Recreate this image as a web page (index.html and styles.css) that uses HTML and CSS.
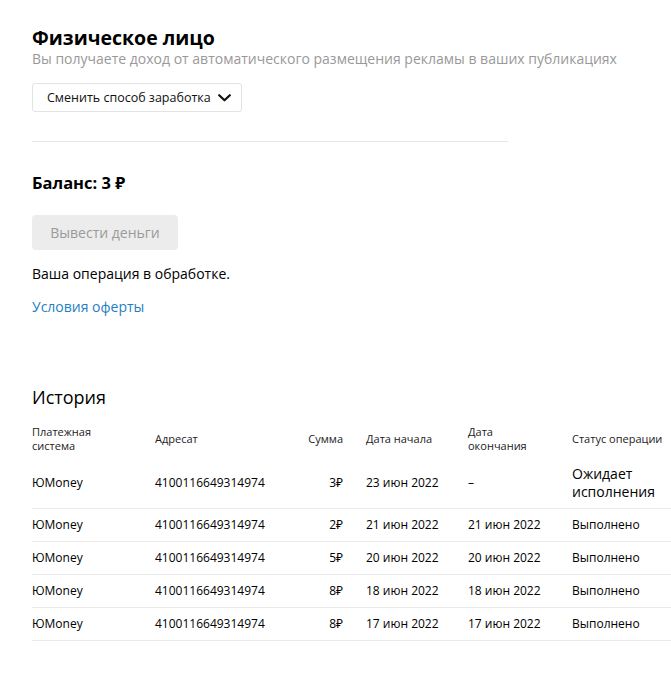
FILE: index.html
```html
<!DOCTYPE html>
<html lang="ru">
<head>
<meta charset="utf-8">
<link rel="stylesheet" href="styles.css">
</head>
<body>
<main class="page">
  <section class="head">
    <h1 class="title">Физическое лицо</h1>
    <p class="subtitle">Вы получаете доход от автоматического размещения рекламы в ваших публикациях</p>
    <button class="switch">Сменить способ заработка
      <svg class="chev" width="13" height="8" viewBox="0 0 13 8"><path d="M1.2 1.2 L6.5 6.3 L11.8 1.2" fill="none" stroke="#111" stroke-width="2.2" stroke-linecap="round" stroke-linejoin="round"/></svg>
    </button>
  </section>
  <hr class="divider">
  <section class="balance">
    <h2 class="balance-title">Баланс: 3 ₽</h2>
    <button class="withdraw" disabled>Вывести деньги</button>
    <p class="status">Ваша операция в обработке.</p>
    <a class="offer" href="#">Условия оферты</a>
  </section>
  <section class="history">
    <h2 class="history-title">История</h2>
    <table class="hist">
      <colgroup>
        <col class="c1"><col class="c2"><col class="c3"><col class="c4"><col class="c5"><col class="c6">
      </colgroup>
      <thead>
        <tr>
          <th>Платежная<br>система</th>
          <th>Адресат</th>
          <th class="num">Сумма</th>
          <th class="d1">Дата начала</th>
          <th>Дата<br>окончания</th>
          <th>Статус операции</th>
        </tr>
      </thead>
      <tbody>
        <tr class="first">
          <td>ЮMoney</td><td>4100116649314974</td><td class="num">3₽</td><td class="d1">23 июн 2022</td><td>–</td><td class="wait">Ожидает<br>исполнения</td>
        </tr>
        <tr>
          <td>ЮMoney</td><td>4100116649314974</td><td class="num">2₽</td><td class="d1">21 июн 2022</td><td>21 июн 2022</td><td>Выполнено</td>
        </tr>
        <tr>
          <td>ЮMoney</td><td>4100116649314974</td><td class="num">5₽</td><td class="d1">20 июн 2022</td><td>20 июн 2022</td><td>Выполнено</td>
        </tr>
        <tr>
          <td>ЮMoney</td><td>4100116649314974</td><td class="num">8₽</td><td class="d1">18 июн 2022</td><td>18 июн 2022</td><td>Выполнено</td>
        </tr>
        <tr>
          <td>ЮMoney</td><td>4100116649314974</td><td class="num">8₽</td><td class="d1">17 июн 2022</td><td>17 июн 2022</td><td>Выполнено</td>
        </tr>
      </tbody>
    </table>
  </section>
</main>
</body>
</html>
```

FILE: styles.css
```css
html, body {
  margin: 0;
  padding: 0;
  background: #fff;
  overflow-x: hidden;
}
body {
  font-family: "Open Sans", "Noto Sans", Arial, sans-serif;
  color: #000;
}
.page {
  padding: 26px 0 0 32px;
}
.title {
  margin: 0;
  font-size: 19.5px;
  font-weight: 700;
  line-height: 24px;
}
.subtitle {
  margin: 0;
  font-size: 14px;
  line-height: 18px;
  color: #999;
}
.switch {
  margin-top: 15px;
  display: flex;
  align-items: center;
  gap: 7px;
  height: 29px;
  padding: 0 10px 0 14px;
  background: #fff;
  border: 1px solid #e3e3e3;
  border-radius: 3px;
  font-family: inherit;
  font-size: 12.5px;
  color: #111;
}
.divider {
  width: 476px;
  margin: 29px 0 0;
  border: 0;
  border-top: 1px solid #e6e6e6;
}
.balance {
  padding-top: 30px;
}
.balance-title {
  margin: 0;
  font-size: 16.5px;
  font-weight: 700;
  line-height: 22px;
}
.withdraw {
  display: block;
  margin-top: 21px;
  width: 146px;
  height: 35px;
  border: 0;
  border-radius: 4px;
  background: #ececec;
  color: #9a9a9a;
  font-family: inherit;
  font-size: 14px;
}
.status {
  margin: 14px 0 0;
  font-size: 14px;
  line-height: 20px;
}
.offer {
  display: inline-block;
  margin-top: 13px;
  font-size: 14px;
  line-height: 20px;
  color: #1f7fc1;
  text-decoration: none;
}
.history {
  padding-top: 68px;
}
.history-title {
  margin: 0;
  font-size: 18px;
  font-weight: 400;
  line-height: 24px;
}
.hist {
  margin-top: 11px;
  width: 660px;
  table-layout: fixed;
  border-collapse: collapse;
}
.c1 { width: 123px; }
.c2 { width: 150px; }
.c3 { width: 38px; }
.c4 { width: 125px; }
.c5 { width: 104px; }
.c6 { width: 120px; }
.hist th {
  font-weight: 400;
  font-size: 11px;
  line-height: 14px;
  text-align: left;
  color: #222;
  height: 38px;
  padding: 0;
  vertical-align: middle;
  white-space: nowrap;
}
.hist td {
  font-size: 12px;
  line-height: 16px;
  height: 32px;
  padding: 0;
  border-bottom: 1px solid #ebebeb;
  vertical-align: middle;
  white-space: nowrap;
}
.hist tr.first td {
  height: 50px;
}
.hist .num { text-align: right; }
.hist .d1 { padding-left: 23px; }
.hist td.wait {
  font-size: 14px;
  line-height: 18px;
}
```
